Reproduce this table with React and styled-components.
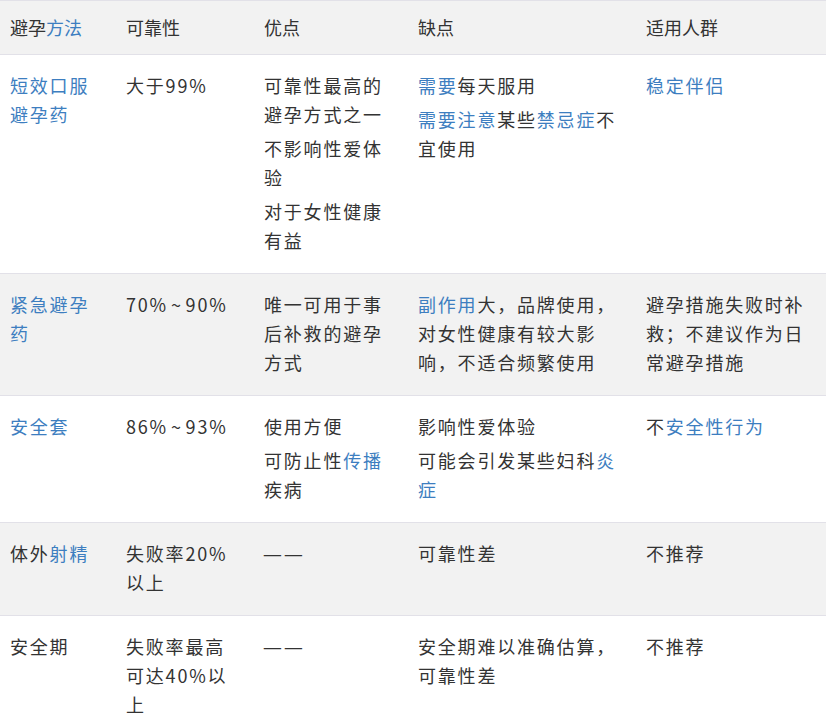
import React from "react";
import styled, { createGlobalStyle } from "styled-components";

const GlobalStyle = createGlobalStyle`
  html, body {
    margin: 0;
    padding: 0;
    background: #fff;
  }
  body {
    font-family: "Noto Sans CJK SC", "Microsoft YaHei", sans-serif;
    color: #333;
  }
`;

// 表格数据: 每个单元格是段落数组, 段落是片段数组, {l: 文本} 表示链接, {w: 文本} 表示破折号
const header = [["避孕", { l: "方法" }], ["可靠性"], ["优点"], ["缺点"], ["适用人群"]];

const rows = [
  [
    [[{ l: "短效口服避孕药" }]],
    [["大于99%"]],
    [["可靠性最高的避孕方式之一"], ["不影响性爱体验"], ["对于女性健康有益"]],
    [[{ l: "需要" }, "每天服用"], [{ l: "需要注意" }, "某些", { l: "禁忌症" }, "不宜使用"]],
    [[{ l: "稳定伴侣" }]],
  ],
  [
    [[{ l: "紧急避孕药" }]],
    [["70%\u200a~\u200a90%"]],
    [["唯一可用于事后补救的避孕方式"]],
    [[{ l: "副作用" }, "大，品牌使用，对女性健康有较大影响，不适合频繁使用"]],
    [["避孕措施失败时补救；不建议作为日常避孕措施"]],
  ],
  [
    [[{ l: "安全套" }]],
    [["86%\u200a~\u200a93%"]],
    [["使用方便"], ["可防止性", { l: "传播" }, "疾病"]],
    [["影响性爱体验"], ["可能会引发某些妇科", { l: "炎症" }]],
    [["不", { l: "安全性行为" }]],
  ],
  [
    [["体外", { l: "射精" }]],
    [["失败率20%以上"]],
    [[{ w: "——" }]],
    [["可靠性差"]],
    [["不推荐"]],
  ],
  [
    [["安全期"]],
    [["失败率最高可达40%以上"]],
    [[{ w: "——" }]],
    [["安全期难以准确估算，可靠性差"]],
    [["不推荐"]],
  ],
];

const widths = [116, 138, 154, 228, 190];

function Segments({ parts }) {
  return parts.map((s, i) => {
    if (typeof s === "string") return <React.Fragment key={i}>{s}</React.Fragment>;
    if (s.w)
      return (
        <React.Fragment key={i}>
          {[...s.w].map((ch, j) => (
            <Dash key={j}>{ch}</Dash>
          ))}
        </React.Fragment>
      );
    return <Link key={i}>{s.l}</Link>;
  });
}

function App() {
  return (
    <>
      <GlobalStyle />
      <Table>
        <colgroup>
          {widths.map((w, i) => (
            <col key={i} style={{ width: w }} />
          ))}
        </colgroup>
        <thead>
          <tr>
            {header.map((h, i) => (
              <Th key={i}>
                <Segments parts={h} />
              </Th>
            ))}
          </tr>
        </thead>
        <tbody>
          {rows.map((row, r) => (
            <Row key={r} $striped={r % 2 === 1}>
              {row.map((cell, c) => (
                <Td key={c}>
                  {cell.map((p, k) => (
                    <Para key={k}>
                      <Segments parts={p} />
                    </Para>
                  ))}
                </Td>
              ))}
            </Row>
          ))}
        </tbody>
      </Table>
    </>
  );
}

// 表格
const Table = styled.table`
  width: 826px;
  table-layout: fixed;
  border-collapse: collapse;
  border-top: 1px solid #e2e1e8;
  font-size: 18px;
`;

// 表头单元格
const Th = styled.th`
  background: #f2f2f2;
  font-weight: normal;
  text-align: left;
  padding: 12px 10px;
  line-height: 29px;
  border-bottom: 1px solid #e2e1e8;
  color: #333;
`;

// 行
const Row = styled.tr`
  background: ${(p) => (p.$striped ? "#f2f2f2" : "#fff")};
  border-bottom: 1px solid #e2e1e8;
`;

// 内容单元格
const Td = styled.td`
  vertical-align: top;
  padding: 16px 10px 13px;
  letter-spacing: 1.8px;
  line-height: 29px;
  word-break: break-all;
`;

// 段落
const Para = styled.p`
  margin: 0 0 5px;
`;

// 链接文字
const Link = styled.a`
  color: #3d7ec0;
  text-decoration: none;
  cursor: pointer;
`;

// 破折号: 两段分开的横线
const Dash = styled.span`
  display: inline-block;
  width: 17px;
  margin-right: 4px;
  letter-spacing: 0;
  text-align: center;
  transform: scaleX(1.2);
  transform-origin: center;
`;

export default App;
